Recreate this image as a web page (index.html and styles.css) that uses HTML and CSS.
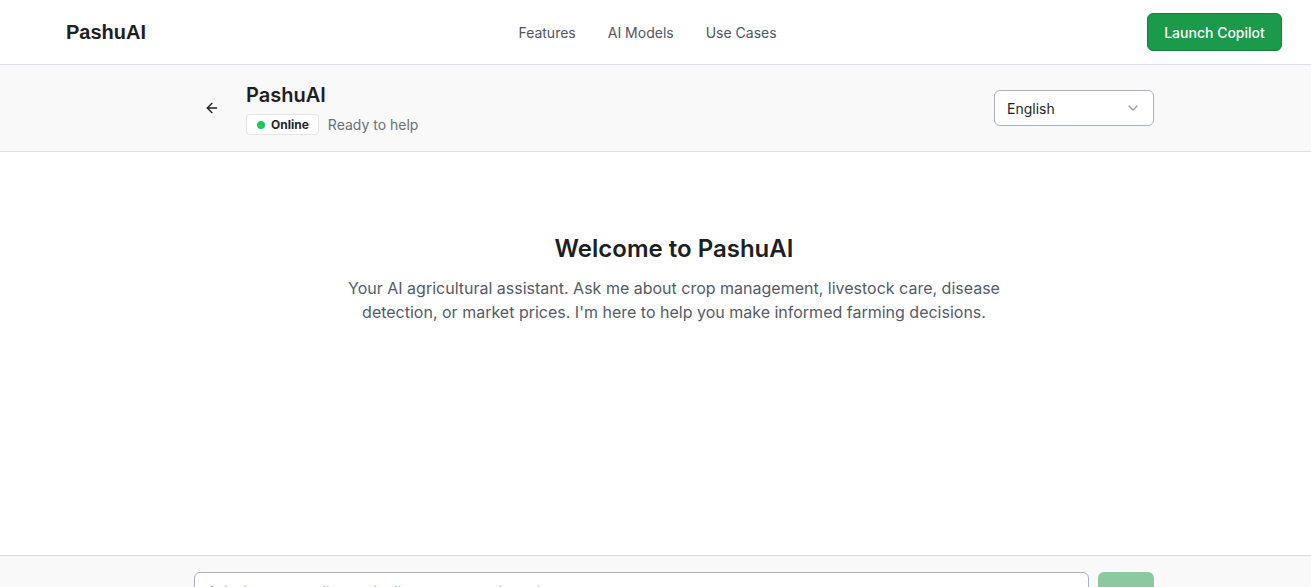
FILE: index.html
```html
<!DOCTYPE html>
<html lang="en">
<head>
<meta charset="utf-8">
<title>PashuAI</title>
<link rel="stylesheet" href="styles.css">
</head>
<body>
<div class="app">
  <header class="nav">
    <div class="nav-inner">
      <div class="logo">PashuAI</div>
      <nav class="links">
        <a href="#">Features</a>
        <a href="#">AI Models</a>
        <a href="#">Use Cases</a>
      </nav>
      <button class="cta">Launch Copilot</button>
    </div>
  </header>

  <section class="chat-head">
    <div class="container head-row">
      <div class="head-left">
        <button class="back" aria-label="Back">
          <svg width="16" height="16" viewBox="0 0 24 24" fill="none" stroke="currentColor" stroke-width="2" stroke-linecap="round" stroke-linejoin="round"><path d="m12 19-7-7 7-7"/><path d="M19 12H5"/></svg>
        </button>
        <div class="title-block">
          <h1 class="title">PashuAI</h1>
          <div class="status">
            <span class="badge"><span class="dot"></span>Online</span>
            <span class="ready">Ready to help</span>
          </div>
        </div>
      </div>
      <div class="select">
        <span>English</span>
        <svg width="16" height="16" viewBox="0 0 24 24" fill="none" stroke="currentColor" stroke-width="2" stroke-linecap="round" stroke-linejoin="round"><path d="m6 9 6 6 6-6"/></svg>
      </div>
    </div>
  </section>

  <main class="main">
    <div class="container welcome">
      <h2 class="w-title">Welcome to PashuAI</h2>
      <p class="w-text">Your AI agricultural assistant. Ask me about crop management, livestock care, disease detection, or market prices. I'm here to help you make informed farming decisions.</p>
    </div>
  </main>

  <footer class="composer">
    <div class="container comp-row">
      <div class="input"><span class="ph">Ask about crops, livestock, diseases, or market prices...</span></div>
      <button class="send" aria-label="Send"></button>
    </div>
  </footer>
</div>
</body>
</html>
```

FILE: styles.css
```css
* { box-sizing: border-box; }
html, body { margin: 0; padding: 0; }
body {
  font-family: Inter, "Noto Sans", sans-serif;
  color: #1c1f24;
  background: #fff;
  height: 587px;
  overflow: hidden;
}
.app { display: flex; flex-direction: column; height: 587px; }

.nav { height: 65px; border-bottom: 1px solid #dcdee3; background: #fff; flex: none; }
.nav-inner {
  height: 64px;
  display: flex;
  align-items: center;
  justify-content: space-between;
  padding: 0 29px 0 66px;
}
.logo {
  font-family: "Liberation Sans", Arial, sans-serif;
  font-weight: 700;
  font-size: 20px;
  color: #1c1f24;
}
.links { display: flex; gap: 32px; margin-left: 2px; padding-top: 1px; }
.links a {
  color: #4f5561;
  font-size: 14px;
  text-decoration: none;
}
.cta {
  font-family: Inter, sans-serif;
  background: #1a9a4a;
  color: #fff;
  border: 1px solid #14803c;
  border-radius: 6px;
  height: 38px;
  width: 135px;
  font-size: 14px;
  font-weight: 500;
  cursor: pointer;
}

.container { width: 960px; margin-left: 194px; }

.chat-head {
  flex: none;
  background: #f9f9f9;
  border-bottom: 1px solid #dcdee3;
  height: 87px;
}
.head-row {
  height: 86px;
  display: flex;
  align-items: center;
  justify-content: space-between;
}
.head-left { display: flex; align-items: center; gap: 16px; }
.back {
  width: 36px; height: 36px;
  border: 0; background: transparent;
  display: flex; align-items: center; justify-content: center;
  color: #1c1f24;
  padding: 0;
}
.title-block { display: flex; flex-direction: column; gap: 7px; margin-top: 2px; }
.title { margin: 0; font-size: 20px; font-weight: 600; line-height: 24px; color: #1c1f24; }
.status { display: flex; align-items: center; gap: 9px; }
.badge {
  display: inline-flex; align-items: center; gap: 6px;
  height: 21px;
  padding: 0 9px 0 10px;
  border: 1px solid #e3e5e8;
  background: #fff;
  border-radius: 4px;
  font-size: 12px;
  font-weight: 700;
  color: #1c1f24;
}
.dot { width: 8px; height: 8px; border-radius: 50%; background: #22c55e; }
.ready { font-size: 14px; color: #6b7079; }

.select {
  width: 160px; height: 36px;
  border: 1px solid #a6b1c2;
  border-radius: 6px;
  background: #fff;
  display: flex; align-items: center; justify-content: space-between;
  padding: 0 12px;
  font-size: 14px;
  color: #1c1f24;
}
.select svg { color: #9aa0a8; }

.main { flex: 1; background: #fff; }
.welcome { text-align: center; padding-top: 81px; }
.w-title { margin: 0; font-size: 24px; line-height: 32px; font-weight: 600; color: #1c1f24; }
.w-text {
  margin: 11px auto 0;
  max-width: 672px;
  font-size: 16px;
  line-height: 24px;
  color: #555b66;
}

.composer {
  flex: none;
  height: 32px;
  border-top: 1px solid #d6d9df;
  background: #f9f9f9;
  overflow: hidden;
}
.comp-row { display: flex; gap: 9px; padding-top: 16px; }
.input {
  flex: 1;
  height: 44px;
  border: 1px solid #a6b1c2;
  border-radius: 6px;
  background: #fff;
  padding: 9px 12px;
  font-size: 14px;
  line-height: 20px;
}
.ph { color: #8a8f98; }
.send {
  width: 56px; height: 44px;
  border: 0;
  border-radius: 6px;
  background: #8cc9a1;
}
```
